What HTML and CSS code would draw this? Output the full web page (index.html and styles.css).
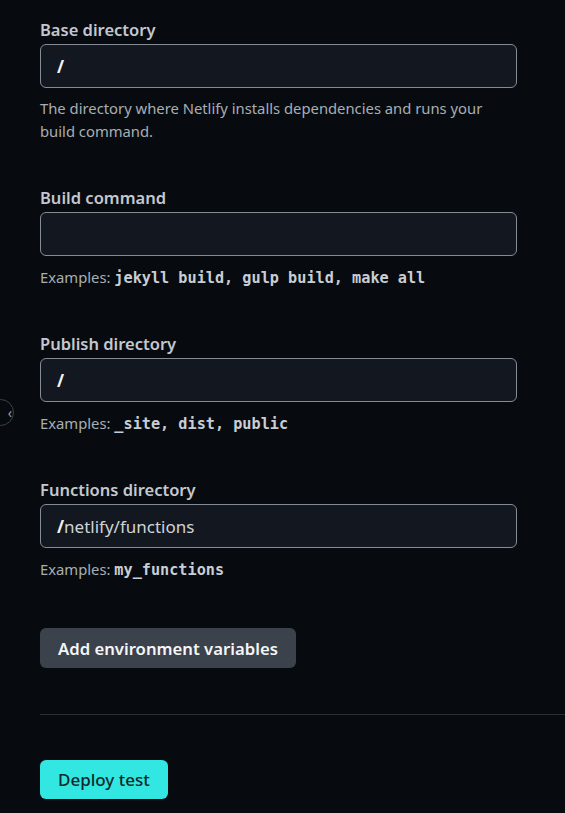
FILE: index.html
```html
<!DOCTYPE html>
<html>
<head>
<meta charset="utf-8">
<link rel="stylesheet" href="styles.css">
</head>
<body>
<div class="handle"><span>‹</span></div>
<main class="page">
  <div class="field">
    <label class="label">Base directory</label>
    <div class="input"><span class="prefix">/</span></div>
    <p class="help help-long">The directory where Netlify installs dependencies and runs your build command.</p>
  </div>
  <div class="field">
    <label class="label">Build command</label>
    <div class="input"></div>
    <p class="help">Examples: <code>jekyll build, gulp build, make all</code></p>
  </div>
  <div class="field">
    <label class="label">Publish directory</label>
    <div class="input"><span class="prefix">/</span></div>
    <p class="help">Examples: <code>_site, dist, public</code></p>
  </div>
  <div class="field">
    <label class="label">Functions directory</label>
    <div class="input"><span class="prefix">/</span><span class="value">netlify/functions</span></div>
    <p class="help">Examples: <code>my_functions</code></p>
  </div>
  <div class="actions actions-env">
    <button class="btn btn-secondary">Add environment variables</button>
  </div>
  <hr class="divider">
  <div class="actions">
    <button class="btn btn-primary">Deploy test</button>
  </div>
</main>
</body>
</html>
```
FILE: styles.css
```css
html, body {
  margin: 0;
  padding: 0;
  background: #070b0f;
  height: 100%;
  overflow: hidden;
}
body {
  font-family: "Noto Sans", "Open Sans", sans-serif;
  color: #c3c7cc;
  position: relative;
}
.page {
  display: flex;
  flex-direction: column;
  gap: 45px;
  padding: 20px 0 0 40px;
}
.field {
  display: flex;
  flex-direction: column;
  width: 477px;
}
.label {
  font-size: 16.5px;
  line-height: 20px;
  font-weight: 600;
  color: #c4c8ce;
  margin-bottom: 4px;
}
.input {
  box-sizing: border-box;
  height: 44px;
  border: 1px solid #858c96;
  border-radius: 6px;
  background: #131820;
  display: flex;
  align-items: center;
  padding-left: 16px;
  font-size: 17px;
}
.prefix {
  color: #f2f4f6;
  font-weight: 700;
}
.value {
  color: #d0d4d9;
}
.help {
  margin: 10px 0 0 0;
  font-size: 14.8px;
  line-height: 23px;
  color: #a9aeb4;
}
.help-long {
  margin-top: 9px;
}
.help code {
  font-family: "DejaVu Sans Mono", "Liberation Mono", monospace;
  font-size: 15.2px;
  line-height: 0;
  font-weight: 600;
  color: #c9ced4;
}
.actions {
  display: flex;
}
.actions-env {
  margin-top: 2px;
}
.btn {
  border: none;
  border-radius: 6px;
  font-family: inherit;
  font-size: 17px;
  cursor: pointer;
}
.btn-secondary {
  height: 40px;
  padding: 0 18px;
  background: #3b424c;
  color: #f4f6f8;
  font-weight: 600;
  font-size: 16.7px;
}
.btn-primary {
  height: 39px;
  padding: 0 18px;
  background: #32e6e1;
  color: #0d2a2b;
  font-weight: 500;
}
.divider {
  margin: 1px 0 0 0;
  border: none;
  height: 1px;
  background: #2a2f36;
  width: 100%;
}
.handle {
  position: absolute;
  left: -13px;
  top: 399px;
  width: 25px;
  height: 25px;
  border: 1px solid #3d434b;
  border-radius: 50%;
  display: flex;
  align-items: center;
  justify-content: flex-end;
  color: #9aa0a7;
  font-size: 14px;
}
.handle span {
  margin-right: 1px;
}
```
